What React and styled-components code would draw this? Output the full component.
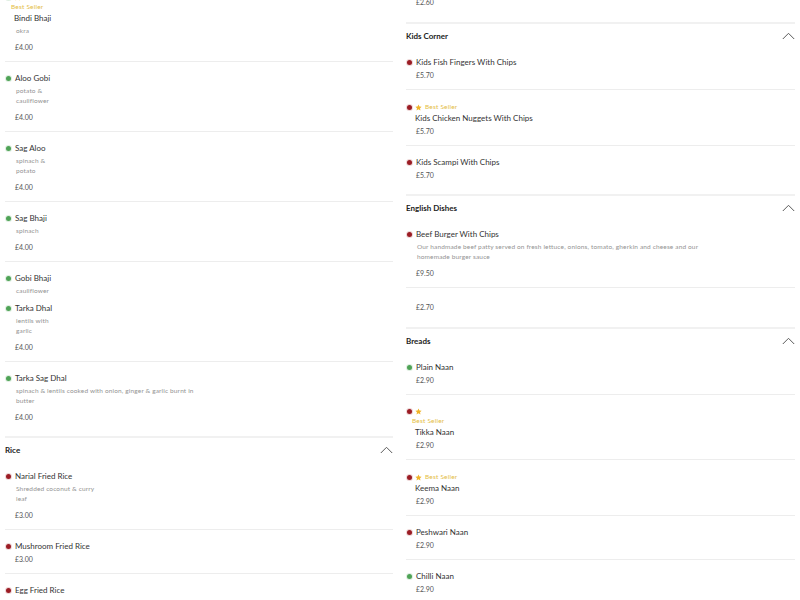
import styled, { createGlobalStyle } from 'styled-components'

const GlobalStyle = createGlobalStyle`
  html, body {
    margin: 0;
    padding: 0;
    background: #fff;
  }
  body {
    font-family: 'Lato', 'Noto Sans', sans-serif;
    color: #333;
    overflow: hidden;
  }
`

const Page = styled.div`
  display: grid;
  grid-template-columns: 398px 1fr;
  column-gap: 3px;
  inline-size: 800px;
  block-size: 600px;
  overflow: hidden;
`

const Column = styled.div`
  padding: 0 5px;
  margin-top: ${({ $offset }) => `-${$offset}px`};
`

const Section = styled.section`
  padding-bottom: 5px;
  & + & {
    border-top: 2px solid #f1f1f1;
  }
`

const SectionHeader = styled.div`
  display: flex;
  align-items: center;
  justify-content: space-between;
  padding: 7px 0 5px;
  & h2 {
    margin: 0;
    font-size: 8px;
    line-height: 10px;
    font-weight: 700;
    color: #222;
  }
`

const Item = styled.div`
  padding: ${({ $empty }) => ($empty ? '14px 0 10px' : '11px 0 9px')};
  border-bottom: 1px solid #ededed;
  &:last-child {
    border-bottom: none;
  }
  &.bare {
    border-bottom: none;
    padding-bottom: 0;
    margin-bottom: -4px;
  }
`

const BadgeRow = styled.div`
  display: flex;
  align-items: center;
  gap: 3px;
  block-size: ${({ $wrap }) => ($wrap ? '10px' : '12px')};
  padding-left: 1px;
`

const Dot = styled.span`
  display: inline-block;
  flex: none;
  inline-size: 5px;
  block-size: 5px;
  border-radius: 50%;
  background: ${({ $veg }) => ($veg ? '#4fa356' : '#9b1c24')};
  box-shadow: 0 0 0 1px ${({ $veg }) => ($veg ? 'rgba(79,163,86,0.18)' : 'rgba(155,28,36,0.18)')};
`

const BestSeller = styled.span`
  font-size: 6.5px;
  line-height: 10px;
  color: #e4bd45;
  letter-spacing: 0.2px;
`

const WrappedLabel = styled(BestSeller)`
  display: block;
  line-height: 9px;
  margin-bottom: 2px;
  padding-left: 6px;
`

const Name = styled.div`
  display: flex;
  align-items: center;
  gap: 4px;
  font-size: 8px;
  line-height: 10px;
  color: #333;
  margin-bottom: 3px;
  padding-left: ${({ $indent }) => ($indent ? '9px' : '1px')};
`

const Desc = styled.div`
  padding-left: 11px;
  margin: 0 0 6px;
  font-size: 6.5px;
  line-height: 10px;
  color: #939393;
  letter-spacing: 0.15px;
  & span {
    display: block;
  }
  .bare & {
    margin-bottom: 0;
  }
`

const Price = styled.div`
  padding-left: 10px;
  font-size: 7px;
  line-height: 10px;
  color: #555;
`

const Star = () => (
  <svg width='7' height='7' viewBox='0 0 24 24'>
    <path
      fill='#f0b429'
      d='M12 1.5l3.2 6.9 7.5.9-5.5 5.2 1.5 7.4L12 18.2l-6.7 3.7 1.5-7.4L1.3 9.3l7.5-.9z'
    />
  </svg>
)

const Chevron = () => (
  <svg width='13' height='8' viewBox='0 0 13 8'>
    <path d='M0.8 7L6.5 1.3 12.2 7' fill='none' stroke='#5a5a5a' strokeWidth='1' />
  </svg>
)

const MenuItem = ({ name, veg, desc, price, badge, empty, bare }) => {
  if (empty) {
    return (
      <Item $empty>
        <Price>{price}</Price>
      </Item>
    )
  }
  return (
    <Item className={bare ? 'bare' : undefined}>
      {badge === 'inline' && (
        <BadgeRow>
          <Dot $veg={veg} />
          <Star />
          <BestSeller>Best Seller</BestSeller>
        </BadgeRow>
      )}
      {badge === 'wrap' && (
        <>
          <BadgeRow $wrap>
            <Dot $veg={veg} />
            <Star />
          </BadgeRow>
          <WrappedLabel>Best Seller</WrappedLabel>
        </>
      )}
      {badge ? (
        <Name $indent>{name}</Name>
      ) : (
        <Name>
          <Dot $veg={veg} />
          {name}
        </Name>
      )}
      {desc && (
        <Desc>
          {desc.map((line) => (
            <span key={line}>{line}</span>
          ))}
        </Desc>
      )}
      {price && <Price>{price}</Price>}
    </Item>
  )
}

const MenuSection = ({ title, items }) => (
  <Section>
    {title && (
      <SectionHeader>
        <h2>{title}</h2>
        <Chevron />
      </SectionHeader>
    )}
    {items.map((item, i) => (
      <MenuItem key={i} {...item} />
    ))}
  </Section>
)

const leftSections = [
  {
    items: [
      { name: 'Bindi Bhaji', veg: true, badge: 'wrap', desc: ['okra'], price: '£4.00' },
      { name: 'Aloo Gobi', veg: true, desc: ['potato &', 'cauliflower'], price: '£4.00' },
      { name: 'Sag Aloo', veg: true, desc: ['spinach &', 'potato'], price: '£4.00' },
      { name: 'Sag Bhaji', veg: true, desc: ['spinach'], price: '£4.00' },
      { name: 'Gobi Bhaji', veg: true, desc: ['cauliflower'], bare: true },
      { name: 'Tarka Dhal', veg: true, desc: ['lentils with', 'garlic'], price: '£4.00' },
      {
        name: 'Tarka Sag Dhal',
        veg: true,
        desc: ['spinach & lentils cooked with onion, ginger & garlic burnt in', 'butter'],
        price: '£4.00',
      },
    ],
  },
  {
    title: 'Rice',
    items: [
      { name: 'Narial Fried Rice', desc: ['Shredded coconut & curry', 'leaf'], price: '£3.00' },
      { name: 'Mushroom Fried Rice', price: '£3.00' },
      { name: 'Egg Fried Rice', price: '£3.00' },
    ],
  },
]

const rightSections = [
  {
    items: [{ empty: true, price: '£2.60' }],
  },
  {
    title: 'Kids Corner',
    items: [
      { name: 'Kids Fish Fingers With Chips', price: '£5.70' },
      { name: 'Kids Chicken Nuggets With Chips', badge: 'inline', price: '£5.70' },
      { name: 'Kids Scampi With Chips', price: '£5.70' },
    ],
  },
  {
    title: 'English Dishes',
    items: [
      {
        name: 'Beef Burger With Chips',
        desc: [
          'Our handmade beef patty served on fresh lettuce, onions, tomato, gherkin and cheese and our',
          'homemade burger sauce',
        ],
        price: '£9.50',
      },
      { empty: true, price: '£2.70' },
    ],
  },
  {
    title: 'Breads',
    items: [
      { name: 'Plain Naan', veg: true, price: '£2.90' },
      { name: 'Tikka Naan', badge: 'wrap', price: '£2.90' },
      { name: 'Keema Naan', badge: 'inline', price: '£2.90' },
      { name: 'Peshwari Naan', price: '£2.90' },
      { name: 'Chilli Naan', veg: true, price: '£2.90' },
    ],
  },
]

const App = () => (
  <>
    <GlobalStyle />
    <Page>
      <Column $offset={19}>
        {leftSections.map((s, i) => (
          <MenuSection key={i} {...s} />
        ))}
      </Column>
      <Column $offset={17}>
        {rightSections.map((s, i) => (
          <MenuSection key={i} {...s} />
        ))}
      </Column>
    </Page>
  </>
)

export default App
